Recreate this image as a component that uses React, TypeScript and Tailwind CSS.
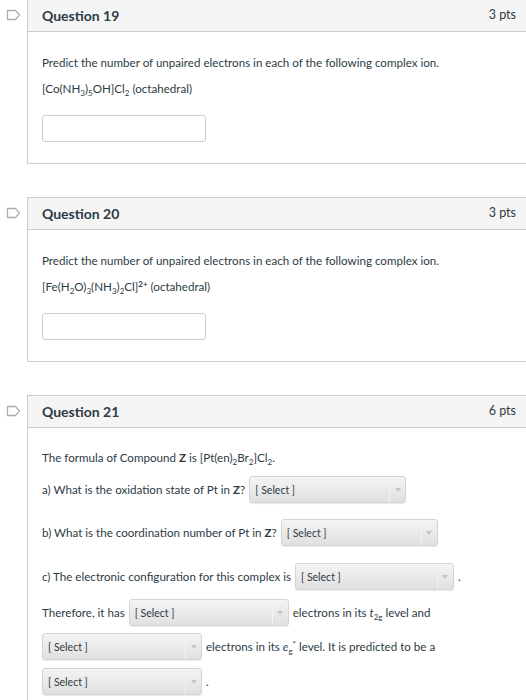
import React from "react";

function Flag() {
  return (
    <div className="w-[27px] shrink-0 flex justify-center pt-[10px]">
      <svg width="15" height="12" viewBox="0 0 15 12">
        <path d="M1.5 1.5 H9.5 L13.5 6 L9.5 10.5 H1.5 Z" fill="none" stroke="#a5afb5" strokeWidth="1.3" strokeLinejoin="round" />
      </svg>
    </div>
  );
}

function Header({ title, pts }: { title: string; pts: string }) {
  return (
    <div className="h-[32px] bg-[#f5f5f5] border-b border-[#c7cdd1] flex items-center justify-between pl-[14px] pr-[10px]">
      <span className="text-[14px] font-bold text-[#2d3b45]">{title}</span>
      <span className="text-[12.5px] text-[#2d3b45]">{pts}</span>
    </div>
  );
}

function Select({ w = 158 }: { w?: number }) {
  return (
    <span
      className="inline-flex h-[27px] items-stretch rounded-[3px] border border-[#d4d4d4] bg-gradient-to-b from-[#f4f4f4] to-[#e0e0e0] shadow-[0_1px_1px_rgba(0,0,0,0.08)] align-middle"
      style={{ width: w }}
    >
      <span className="flex-1 flex items-center pl-[5px] text-[10.5px] text-[#2d3b45]">[ Select ]</span>
      <span className="w-[16px] border-l border-[#f2f2f2] flex items-center justify-center">
        <svg width="6" height="4" viewBox="0 0 6 4">
          <path d="M0 0 H6 L3 4 Z" fill="#c5c5c5" />
        </svg>
      </span>
    </span>
  );
}

function Sub({ children }: { children: React.ReactNode }) {
  return <span className="relative top-[3px] text-[8px] leading-none">{children}</span>;
}
function Sup({ children }: { children: React.ReactNode }) {
  return <span className="relative -top-[4px] text-[8px] leading-none font-bold">{children}</span>;
}

function InputBox() {
  return <div className="w-[164px] h-[27px] border border-[#c7cdd1] rounded-[3px] bg-white" />;
}

export default function App() {
  return (
    <div className="w-[526px] h-[700px] overflow-hidden bg-white font-['Lato','Noto_Sans',sans-serif] text-[#2d3b45]">
      {/* Q19 */}
      <div className="flex -mt-px">
        <Flag />
        <div className="flex-1 border-l border-t border-b border-[#c7cdd1]">
          <Header title="Question 19" pts="3 pts" />
          <div className="pl-[14px] pt-[22px] pb-[21px] text-[11.6px] leading-[18px]">
            <p>Predict the number of unpaired electrons in each of the following complex ion.</p>
            <p className="mt-[8px]">
              [Co(NH<Sub>3</Sub>)<Sub>5</Sub>OH]Cl<Sub>2</Sub> (octahedral)
            </p>
            <div className="mt-[17px]">
              <InputBox />
            </div>
          </div>
        </div>
      </div>

      {/* Q20 */}
      <div className="flex mt-[33px]">
        <Flag />
        <div className="flex-1 border-l border-t border-b border-[#c7cdd1]">
          <Header title="Question 20" pts="3 pts" />
          <div className="pl-[14px] pt-[22px] pb-[21px] text-[11.6px] leading-[18px]">
            <p>Predict the number of unpaired electrons in each of the following complex ion.</p>
            <p className="mt-[8px]">
              [Fe(H<Sub>2</Sub>O)<Sub>3</Sub>(NH<Sub>3</Sub>)<Sub>2</Sub>Cl]<Sup>2+</Sup> (octahedral)
            </p>
            <div className="mt-[17px]">
              <InputBox />
            </div>
          </div>
        </div>
      </div>

      {/* Q21 */}
      <div className="flex mt-[33px]">
        <Flag />
        <div className="flex-1 border-l border-t border-[#c7cdd1]">
          <Header title="Question 21" pts="6 pts" />
          <div className="pl-[14px] pt-[21px] pb-[21px] text-[11.6px] leading-[18px]">
            <p>
              The formula of Compound <b>Z</b> is [Pt(en)<Sub>2</Sub>Br<Sub>2</Sub>]Cl<Sub>2</Sub>.
            </p>
            <div className="mt-[9px] flex items-center gap-[4px]">
              <span>a) What is the oxidation state of Pt in <b>Z</b>?</span>
              <Select w={157} />
            </div>
            <div className="mt-[16px] flex items-center gap-[4px]">
              <span>b) What is the coordination number of Pt in <b>Z</b>?</span>
              <Select w={157} />
            </div>
            <div className="mt-[17px] flex items-center gap-[4px]">
              <span>c) The electronic configuration for this complex is</span>
              <Select w={159} />
              <span>.</span>
            </div>
            <div className="mt-[9px] flex items-center gap-[4px]">
              <span>Therefore, it has</span>
              <Select w={160} />
              <span>
                electrons in its <i>t</i>
                <Sub>2g</Sub> level and
              </span>
            </div>
            <div className="mt-[7px] flex items-center gap-[4px]">
              <Select w={160} />
              <span>
                electrons in its <i>e</i>
                <Sub>g</Sub>
                <span className="relative -top-[4px] text-[8px] leading-none">*</span> level. It is predicted to be a
              </span>
            </div>
            <div className="mt-[8px] flex items-center gap-[4px]">
              <Select w={160} />
              <span>.</span>
            </div>
          </div>
        </div>
      </div>
    </div>
  );
}
